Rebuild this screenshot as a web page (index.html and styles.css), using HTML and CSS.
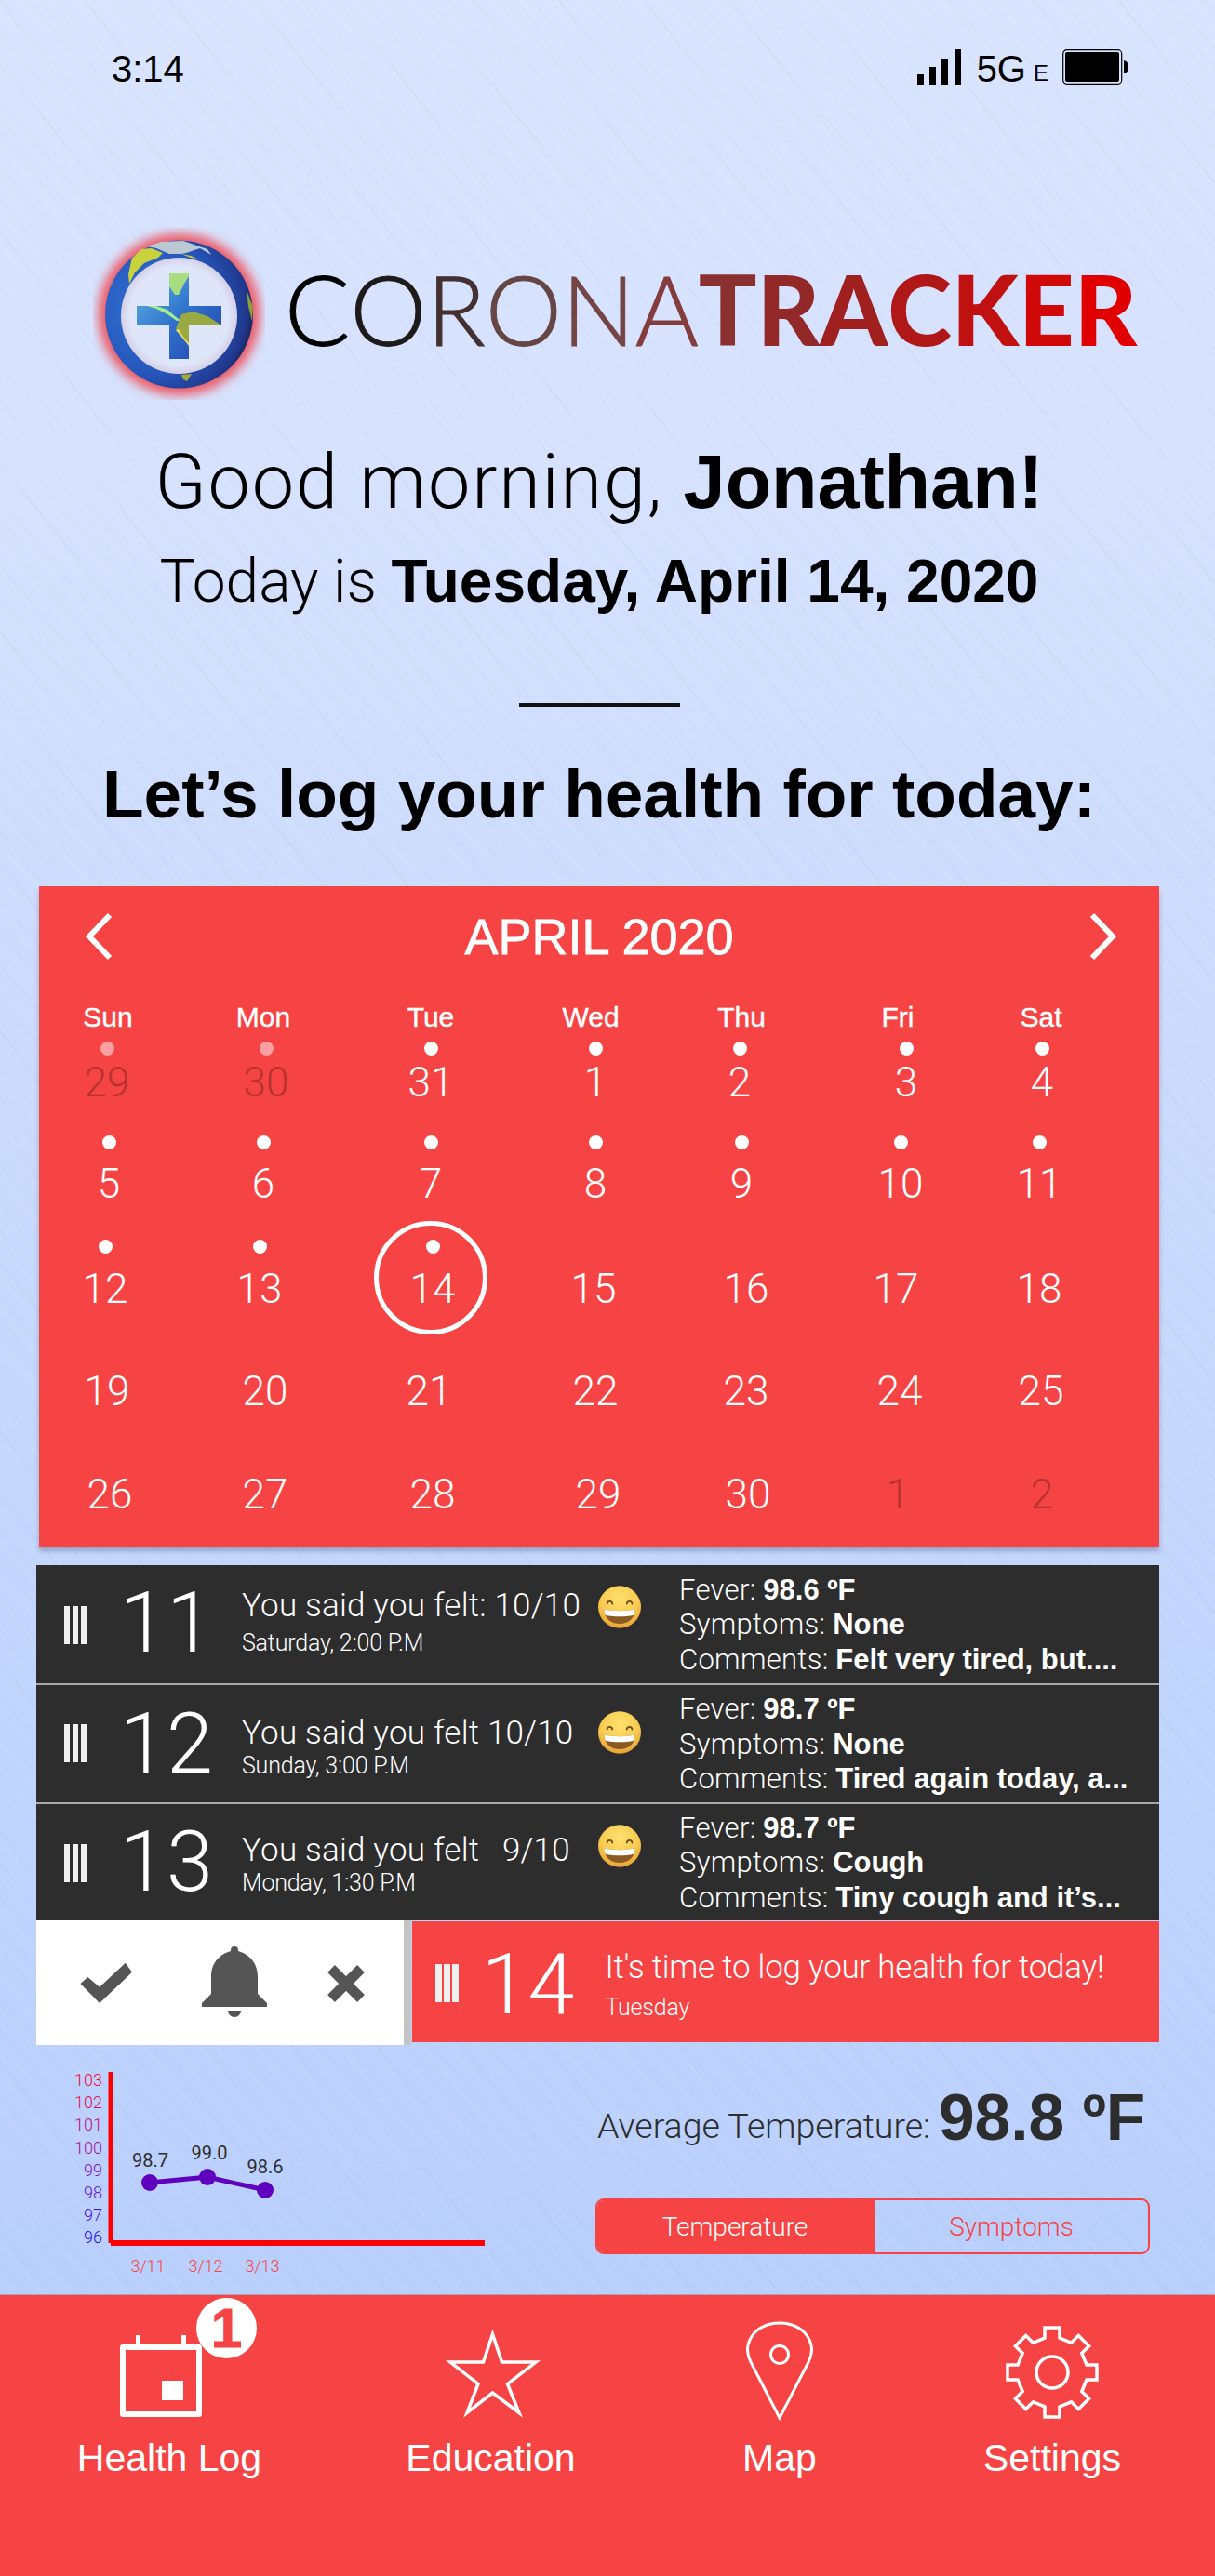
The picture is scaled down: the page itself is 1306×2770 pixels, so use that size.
FILE: index.html
```html
<!DOCTYPE html>
<html lang="en">
<head>
<meta charset="utf-8">
<title>CoronaTracker</title>
<link rel="stylesheet" href="styles.css">
</head>
<body>
<svg class="defs" width="0" height="0" aria-hidden="true">
  <defs>
    <radialGradient id="emojiFace" cx="50%" cy="30%" r="75%">
      <stop offset="0" stop-color="#fde26e"/><stop offset=".6" stop-color="#f8c94f"/><stop offset="1" stop-color="#e49a2f"/>
    </radialGradient>
    <symbol id="emoji" viewBox="0 0 46 46">
      <ellipse cx="23" cy="23" rx="23" ry="22.7" fill="url(#emojiFace)"/>
      <path d="M9.500 19.500c.8-3.500 5-3.500 5.800 0M30.700 19.500c.8-3.500 5-3.500 5.800 0" fill="none" stroke="#6b4a22" stroke-width="1.800" stroke-linecap="round"/>
      <path d="M6.500 25.500c10.500 2.200 22.500 2.200 33 0 0 10-7 15.500-16.500 15.500S6.500 35.500 6.500 25.500z" fill="#8b5a24"/>
      <path d="M6.500 25.500c10.500 2.200 22.500 2.200 33 0 0 2.300-.4 4.400-1.200 6.200-9.500 2-21.100 2-30.600 0-.8-1.800-1.200-3.900-1.200-6.200z" fill="#fff"/>
    </symbol>
  </defs>
</svg>
<main class="app">
  <header class="status">
    <span class="time">3:14</span>
    <div class="status-right">
      <svg class="signal" viewBox="0 0 47 38"><rect x="0" y="27" width="7" height="11"/><rect x="13" y="19" width="7" height="19"/><rect x="26" y="10" width="7" height="28"/><rect x="40" y="0" width="7" height="38"/></svg>
      <span class="net">5G</span><span class="net-small">E</span>
      <svg class="battery" viewBox="0 0 72 38"><rect x=".7" y=".7" width="63" height="36.600" rx="4" fill="none" stroke="#000" stroke-width="1.200"/><rect x="3" y="3" width="58" height="32" rx="2"/><path d="M66 12c4 1 5 4 5 7s-1 6-5 7z"/></svg>
    </div>
  </header>

  <section class="logo">
    <svg class="globe" viewBox="100 245 185 185">
      <defs>
        <filter id="glow" x="-25%" y="-25%" width="150%" height="150%"><feGaussianBlur stdDeviation="6"/></filter>
        <radialGradient id="ball" cx="30%" cy="45%" r="75%">
          <stop offset="0" stop-color="#2f74d2"/><stop offset=".6" stop-color="#2656bc"/><stop offset=".88" stop-color="#20388c"/><stop offset="1" stop-color="#10183e"/>
        </radialGradient>
        <linearGradient id="crossFill" x1="0" y1="0" x2="1" y2="1">
          <stop offset="0" stop-color="#62b6e4"/><stop offset=".5" stop-color="#2f72cc"/><stop offset="1" stop-color="#2440b0"/>
        </linearGradient>
        <radialGradient id="hole" cx="50%" cy="50%" r="50%">
          <stop offset=".85" stop-color="#dfe6fa"/><stop offset="1" stop-color="#d5cfe6"/>
        </radialGradient>
        <clipPath id="crossClip"><path d="M182 294h21v35h35v21h-35v36h-21v-36h-35v-21h35z"/></clipPath>
      </defs>
      <circle cx="192.500" cy="338" r="87" fill="#ec5a66" filter="url(#glow)"/>
      <circle cx="192.500" cy="338" r="79.500" fill="url(#ball)"/>
      <path d="M141.700 278l10-10 11.300-1 12 5-5 5-15 6-10 10-6 12-1-10z" fill="#c8d23c"/>
      <path d="M158 265l15-5 24-1 26 9 4 6-12-7-15 5-5 1h-13l-14-6z" fill="#bcc8d4"/>
      <path d="M195 273l10 2 7 3-7-1z" fill="#c8d23c"/>
      <path d="M265 312l7 18-1 15-4-15z" fill="#8f9a3a"/>
      <path d="M195 403l11-1-5 8-4-2z" fill="#a5a83a"/>
      <circle cx="192.500" cy="339.500" r="62.500" fill="url(#hole)"/>
      <g clip-path="url(#crossClip)">
        <rect x="147" y="294" width="91" height="92" fill="url(#crossFill)"/>
        <path d="M182 294h21v3l-5 8-6 12h-4l-6-9z" fill="#a8dc80"/>
        <path d="M158 329h10l12 4 8 7 7 5h-5l-10-7-12-6z" fill="#a8e890"/>
        <path d="M195 338l12-3 16 5 14 9h-34v22l-8-10-6-7 3-8z" fill="#9aaa42"/>
        <path d="M189 355l6 7 8 10v-3l-6-7-5-8z" fill="#f0dc60"/>
      </g>
    </svg>
    <div class="wordmark">
      <span class="l l1">C</span><span class="l l2">O</span><span class="l l3">R</span><span class="l l4">O</span><span class="l l5">N</span><span class="l l6">A</span><span class="b l7">T</span><span class="b l8">R</span><span class="b l9">A</span><span class="b l10">C</span><span class="b l11">K</span><span class="b l12">E</span><span class="b l13">R</span>
    </div>
  </section>

  <section class="intro">
    <h1 class="greet">Good morning, <b>Jonathan!</b></h1>
    <p class="today">Today is <b>Tuesday, April 14, 2020</b></p>
    <div class="rule"></div>
    <h2 class="prompt">Let’s log your health for today:</h2>
  </section>

  <section class="calendar">
    <div class="cal-head">
      <svg class="chev" viewBox="0 0 32 52"><path d="M28 3L6 26l22 23" fill="none" stroke="#fff" stroke-width="6"/></svg>
      <span class="cal-title">APRIL 2020</span>
      <svg class="chev" viewBox="0 0 32 52"><path d="M4 3l22 23L4 49" fill="none" stroke="#fff" stroke-width="6"/></svg>
    </div>
    <div class="cal-row wk">
      <span>Sun</span><span>Mon</span><span>Tue</span><span>Wed</span><span>Thu</span><span>Fri</span><span>Sat</span>
    </div>
    <div class="cal-row r1">
      <div class="day off"><i class="dot"></i>29</div><div class="day off"><i class="dot"></i>30</div><div class="day"><i class="dot"></i>31</div><div class="day"><i class="dot"></i>1</div><div class="day"><i class="dot"></i>2</div><div class="day"><i class="dot"></i>3</div><div class="day"><i class="dot"></i>4</div>
    </div>
    <div class="cal-row r2">
      <div class="day"><i class="dot"></i>5</div><div class="day"><i class="dot"></i>6</div><div class="day"><i class="dot"></i>7</div><div class="day"><i class="dot"></i>8</div><div class="day"><i class="dot"></i>9</div><div class="day"><i class="dot"></i>10</div><div class="day"><i class="dot"></i>11</div>
    </div>
    <div class="cal-row r3">
      <div class="day"><i class="dot"></i>12</div><div class="day"><i class="dot"></i>13</div><div class="day current"><i class="dot"></i>14</div><div class="day">15</div><div class="day">16</div><div class="day">17</div><div class="day">18</div>
    </div>
    <div class="cal-row r4">
      <div class="day">19</div><div class="day">20</div><div class="day">21</div><div class="day">22</div><div class="day">23</div><div class="day">24</div><div class="day">25</div>
    </div>
    <div class="cal-row r5">
      <div class="day">26</div><div class="day">27</div><div class="day">28</div><div class="day">29</div><div class="day">30</div><div class="day off">1</div><div class="day off">2</div>
    </div>
  </section>

  <section class="log">
    <article class="log-row lr1">
      <div class="handle"></div><div class="log-num">11</div>
      <div class="log-main"><p class="felt">You said you felt: 10/10</p><p class="when">Saturday, 2:00 P.M</p></div>
      <svg class="emoji"><use href="#emoji"/></svg>
      <div class="log-info"><p>Fever: <b>98.6 ºF</b></p><p>Symptoms: <b>None</b></p><p>Comments: <b>Felt very tired, but....</b></p></div>
    </article>
    <article class="log-row lr2">
      <div class="handle"></div><div class="log-num">12</div>
      <div class="log-main"><p class="felt">You said you felt 10/10</p><p class="when">Sunday, 3:00 P.M</p></div>
      <svg class="emoji"><use href="#emoji"/></svg>
      <div class="log-info"><p>Fever: <b>98.7 ºF</b></p><p>Symptoms: <b>None</b></p><p>Comments: <b>Tired again today, a...</b></p></div>
    </article>
    <article class="log-row lr3">
      <div class="handle"></div><div class="log-num">13</div>
      <div class="log-main"><p class="felt">You said you felt <span class="felt-gap">9/10</span></p><p class="when">Monday, 1:30 P.M</p></div>
      <svg class="emoji"><use href="#emoji"/></svg>
      <div class="log-info"><p>Fever: <b>98.7 ºF</b></p><p>Symptoms: <b>Cough</b></p><p>Comments: <b>Tiny cough and it’s...</b></p></div>
    </article>
    <div class="today-row">
      <div class="actions">
        <svg class="ic-check" viewBox="0 0 57 45"><path d="M.4 23L21 44 56 10.700 48.800.7 21 26.800 8.400 16z"/></svg>
        <svg class="ic-bell" viewBox="0 0 70 76"><path d="M35 0a4 4 0 0 1 4 4v1c11 3 21 12 21 27v19l10 10v4H0v-4l10-10V32C10 17 20 8 31 5V4a4 4 0 0 1 4-4z"/><path d="M28 69h14a7 7 0 0 1-14 0z"/></svg>
        <svg class="ic-x" viewBox="0 0 42 42"><path d="M5 5l32 32M37 5L5 37" fill="none" stroke="#555" stroke-width="11"/></svg>
      </div>
      <div class="reminder">
        <div class="handle"></div><div class="log-num">14</div>
        <div class="rem-text"><p class="felt">It's time to log your health for today!</p><p class="when">Tuesday</p></div>
      </div>
    </div>
  </section>

  <section class="lower">
    <svg class="chart" viewBox="0 2199 640 268">
      <g class="y-labels">
        <text x="110" y="2243" fill="#f5083a">103</text><text x="110" y="2267" fill="#e50c50">102</text><text x="110" y="2291" fill="#c00f78">101</text><text x="110" y="2316" fill="#a4129a">100</text><text x="110" y="2340" fill="#8a10bc">99</text><text x="110" y="2364" fill="#6a10d4">98</text><text x="110" y="2388" fill="#4a10e8">97</text><text x="110" y="2412" fill="#2c10f8">96</text>
      </g>
      <rect x="116.500" y="2228" width="5.500" height="184" fill="#f00"/>
      <rect x="119" y="2409" width="402" height="6" fill="#f00"/>
      <path d="M161 2347L223 2341 285 2355" fill="none" stroke="#5f00bf" stroke-width="5"/>
      <ellipse cx="161" cy="2347" rx="9" ry="9" fill="#5f00bf"/><ellipse cx="223" cy="2341" rx="9" ry="9" fill="#5f00bf"/><ellipse cx="285" cy="2355" rx="9" ry="9" fill="#5f00bf"/>
      <g class="val-labels"><text x="161.500" y="2330">98.7</text><text x="225" y="2322">99.0</text><text x="285" y="2337">98.6</text></g>
      <g class="x-labels"><text x="159" y="2443">3/11</text><text x="221" y="2443">3/12</text><text x="282" y="2443">3/13</text></g>
    </svg>
    <div class="summary">
      <p class="avg"><span class="avg-label">Average Temperature:</span> <b class="avg-val">98.8 ºF</b></p>
      <div class="toggle"><span class="tog on">Temperature</span><span class="tog">Symptoms</span></div>
    </div>
  </section>

  <nav class="tabs">
    <a class="tab t-health">
      <span class="tab-ic">
        <svg class="ic-cal" viewBox="0 0 88 88"><path d="M3 13h82v72H3z" fill="none" stroke="#fff" stroke-width="6" stroke-linejoin="round"/><path d="M17 0h5v12h-5zM66 0h5v12h-5z" fill="#fff"/><rect x="45" y="49" width="23" height="21" fill="#fff"/></svg>
        <span class="badge">1</span>
      </span>
      <span class="tab-label">Health Log</span>
    </a>
    <a class="tab">
      <span class="tab-ic"><svg class="ic-star" viewBox="0 0 106 99"><path d="M52.500 8l10 30H99L68.500 61.500 81 92.500 52.500 71 25 92.500 37 61.500 7 38h35.500z" fill="none" stroke="#fff" stroke-width="3.500"/></svg></span>
      <span class="tab-label">Education</span>
    </a>
    <a class="tab">
      <span class="tab-ic"><svg class="ic-pin" viewBox="0 0 72 108"><path d="M36 104L5 44C0 34 1 26 4 20 9 9 21 2 36 2s27 7 32 18c3 6 4 14-1 24z" fill="none" stroke="#fff" stroke-width="3"/><circle cx="36" cy="36" r="9.500" fill="none" stroke="#fff" stroke-width="3"/></svg></span>
      <span class="tab-label">Map</span>
    </a>
    <a class="tab">
      <span class="tab-ic"><svg class="ic-gear" viewBox="-50 -50 100 100"><path d="M-8-37v-11H8v11L20.500-31.800l7.800-7.800 11.300 11.300-7.800 7.800L37-8h11V8H37l-5.200 12.500 7.800 7.800-11.300 11.300-7.800-7.800L8 37v11H-8V37l-12.500-5.200-7.800 7.800-11.300-11.300 7.800-7.800L-37 8h-11V-8h11l5.200-12.500-7.800-7.800 11.300-11.300 7.800 7.800z" fill="none" stroke="#fff" stroke-width="3.500"/><circle r="17" fill="none" stroke="#fff" stroke-width="3.500"/></svg></span>
      <span class="tab-label">Settings</span>
    </a>
  </nav>
</main>
</body>
</html>
```
FILE: styles.css
```css
*, *::before, *::after { box-sizing: border-box; }
html, body { margin: 0; padding: 0; }
p, h1, h2 { margin: 0; font-weight: inherit; font-size: inherit; }
b { font-family: "Liberation Sans", sans-serif; font-weight: 700; letter-spacing: 0; }
.defs { position: absolute; }

.app {
  width: 1306px;
  height: 2770px;
  overflow: hidden;
  display: flex;
  flex-direction: column;
  font-family: Roboto, "Liberation Sans", sans-serif;
  font-weight: 300;
  color: #000;
  background:
    repeating-linear-gradient(50deg, rgba(255,255,255,.06) 0 2px, transparent 2px 9px, rgba(110,140,215,.055) 9px 10.500px, transparent 10.500px 23px),
    repeating-linear-gradient(53deg, rgba(120,150,225,.05) 0 1.500px, transparent 1.500px 37px),
    linear-gradient(180deg, #d9e4fe 0, #d6e2fe 500px, #cfddfd 900px, #c7d8fd 1500px, #b9cffc 2467px);
}

/* status bar */
.status {
  height: 100px;
  padding: 53px 92px 0 120px;
  display: flex;
  justify-content: space-between;
  align-items: flex-start;
  font-family: "Liberation Sans", sans-serif;
  font-weight: 400;
}
.time { font-size: 40px; line-height: 38px; margin-top: 2px; }
.status-right { display: flex; align-items: flex-start; height: 38px; }
.signal { width: 47px; height: 38px; }
.net { font-size: 40px; line-height: 38px; margin: 2px 0 0 17px; }
.net-small { font-size: 24px; line-height: 38px; margin: 7px 0 0 8px; }
.battery { width: 72px; height: 38px; margin-left: 15px; }

/* logo */
.logo { margin-top: 145px; height: 185px; padding-left: 100px; display: flex; align-items: center; }
.globe { width: 185px; height: 185px; flex: none; }
.wordmark {
  margin: -12px 0 0 21px;
  display: flex;
  font-family: Lato, "Liberation Sans", sans-serif;
  font-size: 104px;
  line-height: 110px;
  letter-spacing: 0;
}
.wordmark .l { font-weight: 300; -webkit-text-stroke: 1px currentColor; }
.wordmark .b { font-weight: 900; }
.l1 { color: #000; } .l2 { color: #1e1a1a; } .l3 { color: #443030; } .l4 { color: #664545; }
.l5 { color: #754545; } .l6 { color: #853c3c; } .l7 { color: #8a3030; } .l8 { color: #932828; }
.l9 { color: #a02020; } .l10 { color: #b01818; } .l11 { color: #c01010; } .l12 { color: #d00808; } .l13 { color: #e00000; }

/* intro */
.intro { padding-right: 18px; text-align: center; }
.greet { margin-top: 38px; font-size: 81px; line-height: 100px; letter-spacing: 1.800px; }
.today { margin-top: 16px; font-size: 64px; line-height: 80px; }
.rule { margin: 90px auto 0; width: 173px; height: 4px; background: #111; }
.prompt { margin-top: 49px; font-family: "Liberation Sans", sans-serif; font-weight: 700; font-size: 73px; line-height: 90px; }

/* calendar */
.calendar {
  margin: 54px 0 0 42px;
  width: 1204px;
  height: 710px;
  flex: none;
  background: #f64444;
  color: #fff;
  box-shadow: 0 5px 5px rgba(60,70,110,.35);
}
.cal-head {
  height: 122px;
  padding: 28px 44px 0 48px;
  display: flex;
  justify-content: space-between;
  align-items: flex-start;
}
.chev { width: 32px; height: 52px; }
.cal-title { font-family: "Liberation Sans", sans-serif; font-weight: 400; font-size: 54px; line-height: 52px; margin-right: 4px; -webkit-text-stroke: .8px #fff; }
.cal-row { display: grid; margin-left: -2px; align-items: end; text-align: center; }
.wk { height: 38px; grid-template-columns: 152px 182px 178px 166px 158px 178px 130px; align-items: center; font-family: "Liberation Sans", sans-serif; font-weight: 400; font-size: 30px; line-height: 38px; -webkit-text-stroke: .4px #fff; }
.r1 { height: 71px; grid-template-columns: 150px 192px 162px 192px 118px 240px 52px; --dot-gap: 9.500px; }
.r2 { height: 109px; grid-template-columns: 154px 178px 182px 172px 142px 200px 98px; --dot-gap: 17px; }
.r3 { height: 113px; grid-template-columns: 146px 186px 186px 160px 168px 154px 154px; --dot-gap: 18px; }
.r4 { height: 110px; grid-template-columns: 150px 190px 162px 196px 128px 202px 102px; }
.r5 { height: 111px; grid-template-columns: 156px 178px 182px 174px 148px 174px 136px; }
.day { font-size: 44px; line-height: 40px; font-weight: 300; position: relative; }
.dot { display: block; width: 15px; height: 15px; margin: 0 auto var(--dot-gap); border-radius: 50%; background: #fff; }
.off { color: #b53232; }
.off .dot { background: #fa9fa2; }
.current::after {
  content: "";
  position: absolute;
  left: 50%;
  top: -20px;
  width: 122px;
  height: 122px;
  margin-left: -63px;
  border: 5px solid #fff;
  border-radius: 50%;
}

/* log */
.log { margin: 19.500px 0 0 39px; width: 1207px; color: #fff; }
.log-row {
  background: #2d2d2d;
  display: grid;
  grid-template-columns: 95px 126px 383px 87px 1fr;
  align-items: center;
  border-bottom: 2px solid #a9a9a9;
}
.lr1 { height: 129px; --main-top: 24.500px; --sub-gap: 5px; --emoji-top: 22px; --hd: 3px; --nm: -1px; }
.lr2 { height: 128px; --main-top: 32px; --sub-gap: 0px; --emoji-top: 28px; --hd: 0px; --nm: 2px; }
.lr3 { height: 125px; border-bottom: 0; --main-top: 30px; --sub-gap: 0px; --emoji-top: 22.500px; --hd: 3px; --nm: 2px; }
.handle {
  width: 24.500px;
  height: 41px;
  background: repeating-linear-gradient(90deg, #f0f0f0 0 6.500px, transparent 6.500px 9px);
}
.log-row .handle { margin: var(--hd) 0 0 30px; }
.log-num { font-size: 90px; line-height: 90px; font-weight: 300; margin: var(--nm) 0 0 -5px; white-space: nowrap; }
.log-main { align-self: start; margin-top: var(--main-top); }
.felt { font-size: 35px; line-height: 40px; white-space: nowrap; letter-spacing: .2px; }
.felt-gap { margin-left: 16px; }
.when { font-size: 25px; line-height: 30px; margin-top: var(--sub-gap); white-space: nowrap; font-weight: 300; letter-spacing: -.2px; }
.emoji { width: 46px; height: 46px; align-self: start; margin-top: var(--emoji-top); }
.log-info { font-size: 31px; line-height: 37.500px; white-space: nowrap; letter-spacing: .3px; padding-top: 2px; }

.today-row { display: flex; height: 134px; }
.actions {
  width: 394.500px;
  flex: none;
  background: #fff;
  box-shadow: 8px 0 0 #c4c4c4;
  padding: 28px 0 0 46.500px;
  display: flex;
  align-items: flex-start;
}
.actions svg { fill: #555; flex: none; }
.ic-check { width: 57px; height: 45px; margin-top: 17px; }
.ic-bell { width: 70px; height: 76px; margin-left: 74px; }
.ic-x { width: 42px; height: 42px; margin: 19px 0 0 64px; }
.reminder {
  margin: 1.500px 0 3px 9.500px;
  flex: 1;
  background: #f64444;
  display: flex;
  align-items: center;
}
.reminder .handle { margin: 4px 0 0 25px; flex: none; }
.reminder .log-num { margin: 8px 0 0 25px; width: 133px; flex: none; }
.rem-text { margin-top: 8px; }
.rem-text .felt { letter-spacing: -.25px; }
.rem-text .when { margin-top: 8px; }

/* chart + summary */
.lower { height: 268.500px; flex: none; display: flex; }
.chart { width: 640px; height: 268px; flex: none; }
.chart text { font-family: "Roboto", sans-serif; font-weight: 300; }
.y-labels text { font-size: 18px; text-anchor: end; }
.val-labels text { font-size: 20px; text-anchor: middle; fill: #2d2d2d; font-weight: 400; }
.x-labels text { font-size: 18px; text-anchor: middle; fill: #f64444; }
.summary { flex: 1; padding: 0 70px 0 2px; color: #2d2d2d; }
.avg { margin-top: 38px; height: 80px; line-height: 80px; white-space: nowrap; }
.avg-label { font-size: 37.500px; vertical-align: 2px; }
.avg-val { font-size: 69.500px; margin-left: 5px; }
.toggle {
  margin: 47px 0 0 -2px;
  width: 596px;
  height: 60px;
  display: flex;
  border: 2px solid #f64444;
  border-radius: 9px;
  overflow: hidden;
  font-size: 28px;
  color: #f64444;
}
.tog { flex: 1; display: flex; align-items: center; justify-content: center; padding-top: 2px; }
.tog.on { flex: none; width: 298px; background: #f64444; color: #fff; padding-right: 2px; }

/* tabs */
.tabs {
  flex: 1;
  background: #f64444;
  border-top: 1px solid #b0a0c0;
  padding-left: 12px;
  display: grid;
  grid-template-columns: 340px 351px 270px 316px;
  align-content: start;
  color: #fff;
}
.tab { display: flex; flex-direction: column; align-items: center; }
.tab-ic { height: 137px; display: flex; align-items: flex-end; position: relative; }
.ic-cal { width: 88px; height: 88px; margin: 0 18px 6px 0; }
.ic-star { width: 106px; height: 99px; margin: 0 0 4px 5px; }
.ic-pin { width: 72px; height: 108px; margin-bottom: 1px; }
.ic-gear { width: 100px; height: 100px; margin-bottom: 4px; }
.badge {
  position: absolute;
  right: -41px;
  top: 3px;
  width: 65px;
  height: 65px;
  border-radius: 50%;
  background: #fff;
  color: #f64444;
  font-family: "Liberation Sans", sans-serif;
  font-weight: 700;
  font-size: 60px;
  line-height: 65px;
  text-align: center;
  -webkit-text-stroke: 1px #f64444;
}
.tab-label { margin-top: 16px; font-family: "Liberation Sans", sans-serif; font-weight: 400; font-size: 41px; line-height: 44px; white-space: nowrap; }
```
